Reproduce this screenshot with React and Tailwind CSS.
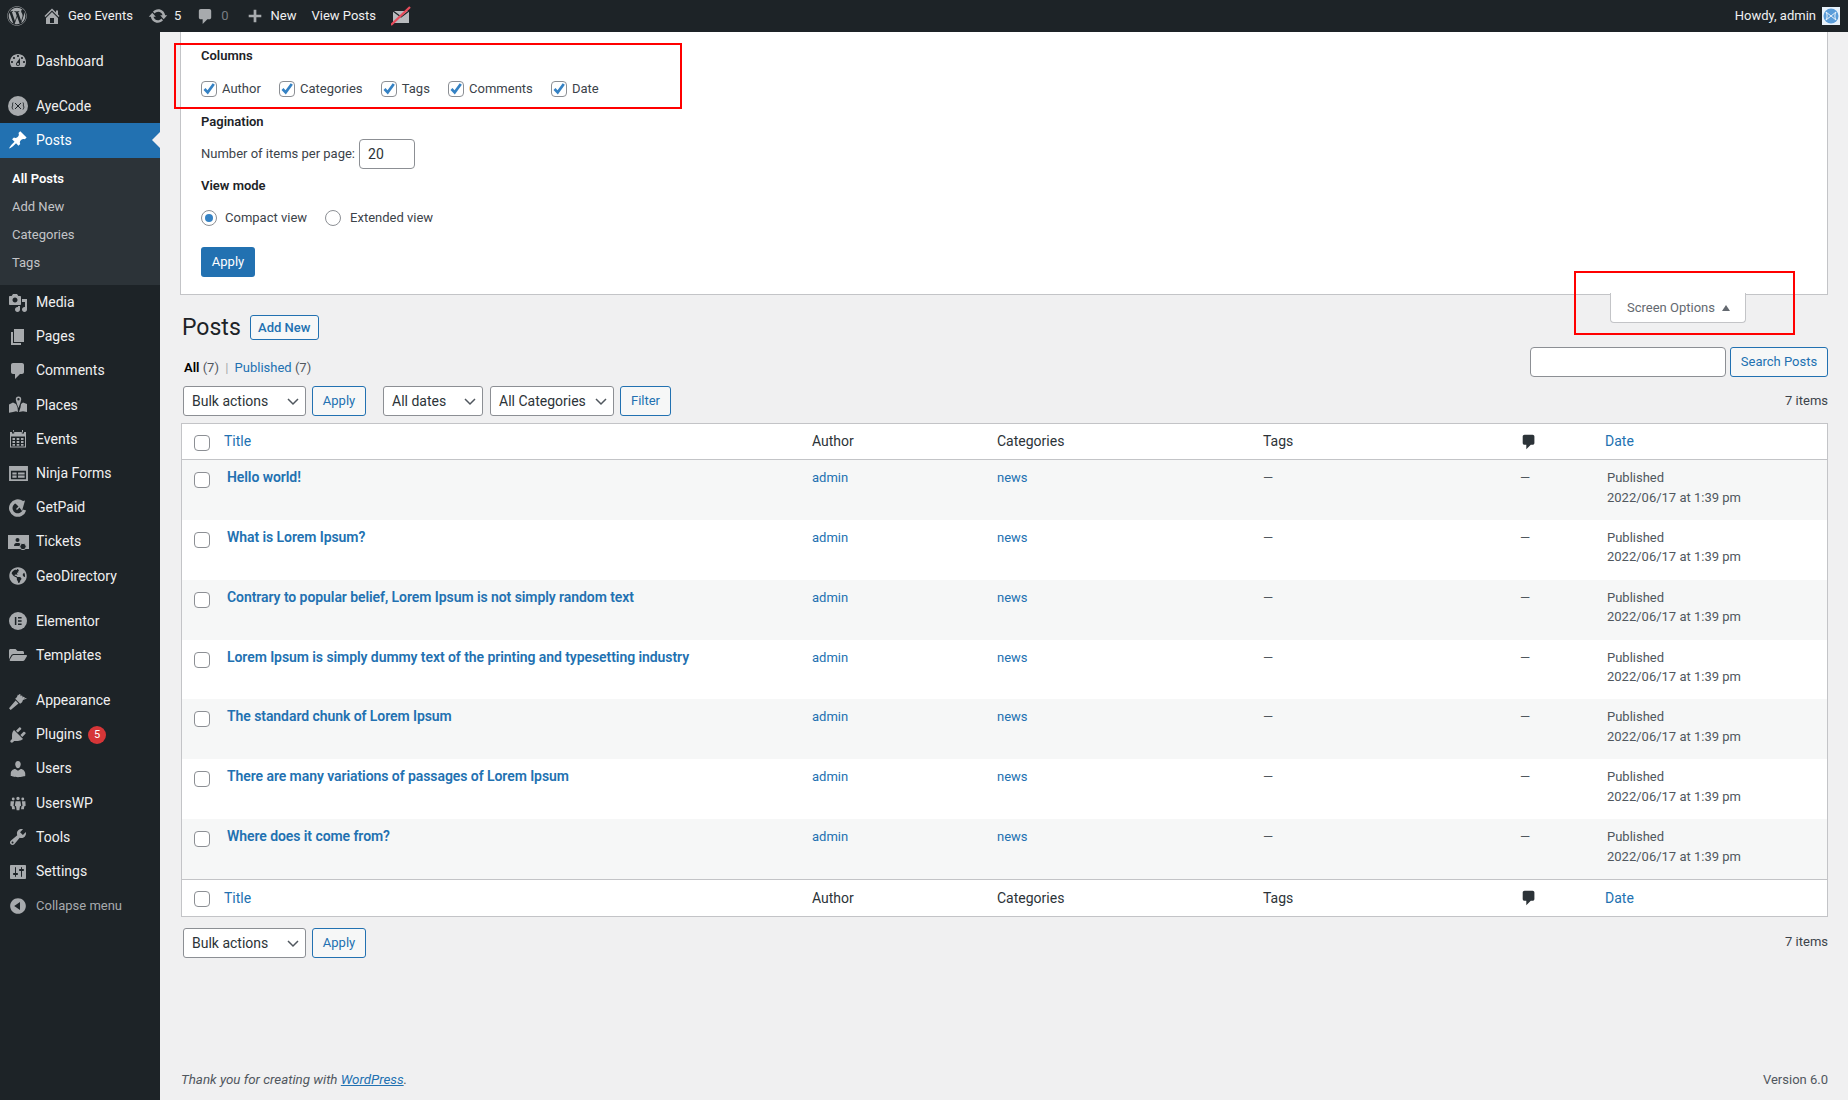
import React from "react";
import { FaWordpress, FaGlobeAmericas, FaFolderOpen } from "react-icons/fa";

const P = {
  home: "M16 8.5l1.53 1.53-1.06 1.06L10 4.62l-6.47 6.47-1.06-1.06L10 2.5l4 4v-2h2v4zm-6-2.46l6 5.99V18H4v-5.97zM12 17v-5H8v5h4z",
  update: "M10.2 3.28c3.53 0 6.43 2.61 6.92 6h2.08l-3.5 4-3.5-4h2.32c-.45-1.97-2.21-3.45-4.32-3.45-1.45 0-2.73.71-3.54 1.78L4.95 5.66C6.23 4.2 8.11 3.28 10.2 3.28zm-.4 13.44c-3.52 0-6.43-2.61-6.92-6H.8l3.5-4c1.17 1.33 2.33 2.67 3.5 4H5.48c.45 1.97 2.21 3.45 4.32 3.45 1.45 0 2.73-.71 3.54-1.78l1.71 1.95c-1.28 1.46-3.15 2.38-5.25 2.38z",
  comment: "M5 2h9c1.1 0 2 .9 2 2v7c0 1.1-.9 2-2 2h-2l-5 5v-5H5c-1.1 0-2-.9-2-2V4c0-1.1.9-2 2-2z",
  plus: "M11.5 3v5.5H17v3h-5.5V17h-3v-5.5H3v-3h5.5V3z",
  dashboard: "M3.76 16h12.48c1.1-1.37 1.76-3.11 1.76-5 0-4.42-3.58-8-8-8s-8 3.58-8 8c0 1.89.66 3.63 1.76 5zM10 4c.55 0 1 .45 1 1s-.45 1-1 1-1-.45-1-1 .45-1 1-1zM6 6c.55 0 1 .45 1 1s-.45 1-1 1-1-.45-1-1 .45-1 1-1zm8 0c.55 0 1 .45 1 1s-.45 1-1 1-1-.45-1-1 .45-1 1-1zm-5.37 5.55L12 7v6c0 1.1-.9 2-2 2s-2-.9-2-2c0-.57.24-1.08.63-1.45zM4 10c.55 0 1 .45 1 1s-.45 1-1 1-1-.45-1-1 .45-1 1-1zm12 0c.55 0 1 .45 1 1s-.45 1-1 1-1-.45-1-1 .45-1 1-1zm-5 3c0-.55-.45-1-1-1s-1 .45-1 1 .45 1 1 1 1-.45 1-1z",
  pin: "M10.44 3.02l1.82-1.82 6.36 6.35-1.83 1.82c-1.05-.68-2.48-.57-3.41.36l-.75.75c-.92.93-1.04 2.35-.35 3.41l-1.83 1.82-2.41-2.41-2.8 2.79c-.42.42-3.38 2.71-3.8 2.29s1.86-3.39 2.28-3.81l2.79-2.79L4.1 9.36l1.83-1.82c1.05.69 2.48.57 3.4-.36l.75-.75c.93-.92 1.05-2.35.36-3.41z",
  media: "M13 11V4c0-.55-.45-1-1-1h-1.67L9 1H5L3.67 3H2c-.55 0-1 .45-1 1v7c0 .55.45 1 1 1h10c.55 0 1-.45 1-1zM7 4.5c1.38 0 2.5 1.12 2.5 2.5S8.38 9.5 7 9.5 4.5 8.38 4.5 7 5.62 4.5 7 4.5zM14 6h5v10.5c0 1.38-1.12 2.5-2.5 2.5S14 17.88 14 16.5s1.12-2.5 2.5-2.5c.17 0 .34.02.5.05V9h-3V6zm-4 8.05V13h2v3.5c0 1.38-1.12 2.5-2.5 2.5S7 17.88 7 16.5 8.12 14 9.5 14c.17 0 .34.02.5.05z",
  page: "M6 15V2h10v13H6zm-1 1h8v2H3V5h2v11z",
  users: "M10 9.25c-2.27 0-2.73-3.44-2.73-3.44C7 4.02 7.82 2 9.97 2c2.16 0 2.98 2.02 2.71 3.81 0 0-.41 3.44-2.68 3.44zm0 2.57L12.72 10c2.39 0 4.52 2.33 4.52 4.53v2.49s-3.65 1.13-7.24 1.13c-3.65 0-7.24-1.13-7.24-1.13v-2.49c0-2.25 1.94-4.48 4.47-4.48z",
  tools: "M16.68 9.77c-1.34 1.34-3.3 1.67-4.95.99l-5.41 6.52c-.99.99-2.59.99-3.58 0s-.99-2.59 0-3.57l6.52-5.42c-.68-1.65-.35-3.61.99-4.95 1.28-1.28 3.12-1.62 4.72-1.06l-2.89 2.89 2.82 2.82 2.86-2.87c.53 1.58.18 3.39-1.08 4.67zM3.81 16.21c.4.39 1.04.39 1.43 0 .4-.4.4-1.04 0-1.43-.39-.4-1.03-.4-1.43 0-.39.39-.39 1.03 0 1.43z",
  plugins: "M13.11 4.36L9.87 7.6 8 5.73l3.24-3.24c.35-.34 1.05-.2 1.56.32.52.51.66 1.21.31 1.55zm-8 1.77l.91-1.12 9.01 9.01-1.19.84c-.71.71-2.63 1.16-3.82 1.16H6.14L4.9 17.26c-.59.59-1.54.59-2.12 0-.59-.58-.59-1.53 0-2.12l1.24-1.24v-3.88c0-1.13.4-3.19 1.09-3.89zm7.26 3.97l3.24-3.24c.34-.35 1.04-.21 1.55.31.52.51.66 1.21.31 1.55l-3.24 3.25z",
  settings: "M18 16V4c0-.55-.45-1-1-1H3c-.55 0-1 .45-1 1v12c0 .55.45 1 1 1h14c.55 0 1-.45 1-1zM8 11h1c.55 0 1 .45 1 1s-.45 1-1 1H8v1.5c0 .28-.22.5-.5.5s-.5-.22-.5-.5V13H6c-.55 0-1-.45-1-1s.45-1 1-1h1V5.5c0-.28.22-.5.5-.5s.5.22.5.5V11zm5-2h-1c-.55 0-1-.45-1-1s.45-1 1-1h1V5.5c0-.28.22-.5.5-.5s.5.22.5.5V7h1c.55 0 1 .45 1 1s-.45 1-1 1h-1v5.5c0 .28-.22.5-.5.5s-.5-.22-.5-.5V9z",
  collapse: "M10 2.16c4.33 0 7.84 3.51 7.84 7.84s-3.51 7.84-7.84 7.84S2.16 14.33 2.16 10 5.71 2.16 10 2.16zm2 11.72V6.12L6.18 9.97z",
  appearance: "M1 17.300L2.700 19l7.800-6.500-2.900-3zM7.200 7.800l4.900 5 2-1.600.9-2.200 4-1.600-1.500-.4-1.200.8.500-1.500-1.300-.6-1.300.8.500-1.500-1.300-.6-1.200.8.600-1.500-1.300-.6-1.200 1.100L10 3.400 8.800 6.200z",
  usersWp: "M10 3a1.900 1.900 0 1 1 0 3.800A1.900 1.900 0 0 1 10 3zM4.700 4a1.600 1.600 0 1 1 0 3.200 1.600 1.600 0 0 1 0-3.200zM15.300 4a1.600 1.600 0 1 1 0 3.200 1.600 1.600 0 0 1 0-3.200zM7.300 8h5.400l.8 5-1.300.6-.7 4.400H8.500l-.7-4.400-1.300-.6zM1.800 8h3.900L5 13l1.200 1 .4 3H3.400l-.3-3-1.600-1zM14.300 8h3.900l.3 5-1.600 1-.3 3h-3.200l.4-3 1.200-1z",
};

const Ico = ({ d, className = "w-5 h-5" }) => (
  <svg viewBox="0 0 20 20" fill="currentColor" className={className}><path d={d} /></svg>
);

const AyeIcon = () => (
  <svg viewBox="0 0 20 20" className="w-5 h-5">
    <circle cx="10" cy="10" r="10" fill="currentColor" />
    <path d="M5 6.500C4 8 5 9 4.500 10S4 12 5 13.500M15 6.500c1 1.500 0 2.500.5 3.500s.5 2-.5 3.500M7 7l6 6M13 7l-6 6" fill="none" stroke="#1d2327" strokeWidth="1" />
  </svg>
);
const PlacesIcon = () => (
  <svg viewBox="0 0 20 20" fill="currentColor" className="w-5 h-5">
    <path d="M1 9.500l4-2 3 1.500 1.500 3.500L10 17l-2-.8-3 .8-4 .8zM11 17l1.500-4.500L13 9l2-1.500 4 1.500V17l-4-.8z" />
    <path d="M10.500 1.500a2.700 2.700 0 0 1 2.700 2.700c0 1.500-1.700 6-2.700 8.800-1-2.800-2.700-7.300-2.700-8.800a2.700 2.700 0 0 1 2.700-2.700zm0 1.500a1.200 1.200 0 1 0 0 2.400 1.200 1.200 0 0 0 0-2.400z" />
  </svg>
);
const EventsIcon = () => (
  <svg viewBox="0 0 20 20" fill="currentColor" className="w-5 h-5">
    <path fillRule="evenodd" d="M5 1h1v2.500h-.2zM14 1h1v2.500h-1zM2 3h2v1.500h2.200V3h7.600v1.500H16V3h2v15.500H2zM3 7.500V17.500h14V7.500z" />
    <path d="M4.500 9h2.500v2H4.500zM8.700 9h2.600v2H8.700zM13 9h2.500v2H13zM4.500 12h2.500v2H4.500zM8.700 12h2.600v2H8.700zM13 12h2.500v2H13zM4.500 15h2.500v1.700H4.500zM8.700 15h2.600v1.700H8.700zM13 15h2.500v1.700H13z" />
  </svg>
);
const NinjaIcon = () => (
  <svg viewBox="0 0 20 18" fill="currentColor" className="w-[19px] h-[17px]">
    <path fillRule="evenodd" d="M0 1h20v16H0zM2 6v9h16V6zM3.500 8H8v2H3.500zM3.500 11H8v2.500H3.500zM9.500 8H16.500v2H9.500zM9.500 11H16.500v2.500H9.500z" />
  </svg>
);
const GetPaidIcon = () => (
  <svg viewBox="0 0 20 20" className="w-5 h-5" fill="none">
    <path d="M14 4.500A7 7 0 1 0 16.500 12" stroke="currentColor" strokeWidth="3.500" />
    <path d="M7 5l10-2.500L14 13l-2.500-3.500L9 12l-1-1 2.500-2.500z" fill="currentColor" />
  </svg>
);
const TicketsIcon = () => (
  <svg viewBox="0 0 21 16" className="w-[21px] h-4">
    <path d="M0 1h21v14H0z" fill="currentColor" />
    <circle cx="9.500" cy="6" r="2" fill="#1d2327" />
    <path d="M6 12c0-2.500 1.500-3 3.500-3s3.500.5 3.500 3z" fill="#1d2327" />
    <circle cx="15" cy="12.500" r="3.200" fill="#1d2327" stroke="currentColor" />
  </svg>
);
const ElementorIcon = () => (
  <svg viewBox="0 0 20 20" className="w-[18px] h-[18px]">
    <circle cx="10" cy="10" r="10" fill="currentColor" />
    <path d="M6.500 5.500h1.700v9H6.500zM10 5.500h4v1.700h-4zM10 9.200h4v1.700h-4zM10 12.800h4v1.700h-4z" fill="#1d2327" />
  </svg>
);

const topMenu = [
  { n: "Media", i: <Ico d={P.media} /> },
  { n: "Pages", i: <Ico d={P.page} /> },
  { n: "Comments", i: <Ico d={P.comment} /> },
  { n: "Places", i: <PlacesIcon /> },
  { n: "Events", i: <EventsIcon /> },
  { n: "Ninja Forms", i: <NinjaIcon /> },
  { n: "GetPaid", i: <GetPaidIcon /> },
  { n: "Tickets", i: <TicketsIcon /> },
  { n: "GeoDirectory", i: <FaGlobeAmericas className="w-[18px] h-[18px]" /> },
];
const midMenu = [
  { n: "Elementor", i: <ElementorIcon /> },
  { n: "Templates", i: <FaFolderOpen className="w-[18px] h-[18px]" /> },
];
const lowMenu = [
  { n: "Appearance", i: <Ico d={P.appearance} /> },
  { n: "Plugins", i: <Ico d={P.plugins} />, badge: "5" },
  { n: "Users", i: <Ico d={P.users} /> },
  { n: "UsersWP", i: <Ico d={P.usersWp} className="w-[18px] h-[18px]" /> },
  { n: "Tools", i: <Ico d={P.tools} /> },
  { n: "Settings", i: <Ico d={P.settings} /> },
];

const MenuItem = ({ item }) => (
  <div className="flex items-center h-[34.2px] text-[14px] text-[#f0f0f1]">
    <span className="w-9 flex justify-center text-[#a7aaad]">{item.i}</span>
    <span>{item.n}</span>
    {item.badge && (
      <span className="ml-[6px] w-[18px] h-[18px] rounded-full bg-[#d63638] text-white text-[11px] flex items-center justify-center">{item.badge}</span>
    )}
  </div>
);

const Sidebar = () => (
  <aside className="w-[160px] shrink-0 bg-[#1d2327] pt-3">
    <MenuItem item={{ n: "Dashboard", i: <Ico d={P.dashboard} /> }} />
    <div className="h-[11px]" />
    <MenuItem item={{ n: "AyeCode", i: <AyeIcon /> }} />
    <div className="relative flex items-center h-[34.2px] bg-[#2271b1] text-white text-[14px]">
      <span className="w-9 flex justify-center"><Ico d={P.pin} /></span>
      <span>Posts</span>
      <span className="absolute right-0 top-[9px] border-y-[8px] border-r-[8px] border-y-transparent border-r-[#f0f0f1]" />
    </div>
    <div className="bg-[#2c3338] pt-[7px] pb-[8.5px] text-[13px] text-[#c3c4c7]">
      <div className="h-[28.1px] flex items-center pl-3 font-semibold text-white">All Posts</div>
      <div className="h-[28.1px] flex items-center pl-3">Add New</div>
      <div className="h-[28.1px] flex items-center pl-3">Categories</div>
      <div className="h-[28.1px] flex items-center pl-3">Tags</div>
    </div>
    {topMenu.map((m) => <MenuItem key={m.n} item={m} />)}
    <div className="h-[11px]" />
    {midMenu.map((m) => <MenuItem key={m.n} item={m} />)}
    <div className="h-[11px]" />
    {lowMenu.map((m) => <MenuItem key={m.n} item={m} />)}
    <div className="flex items-center h-[34.2px] text-[13px] text-[#a7aaad]">
      <span className="w-9 flex justify-center"><Ico d={P.collapse} /></span>
      <span>Collapse menu</span>
    </div>
  </aside>
);

const AdminBar = () => (
  <header className="h-8 bg-[#1d2327] flex items-center text-[13px] text-[#f0f0f1] shrink-0">
    <span className="ml-[7px] text-[#a7aaad]"><FaWordpress className="w-5 h-5" /></span>
    <span className="ml-[15px] text-[#a7aaad]"><Ico d={P.home} className="w-5 h-5" /></span>
    <span className="ml-[6px]">Geo Events</span>
    <span className="ml-[15px] text-[#a7aaad]"><Ico d={P.update} /></span>
    <span className="ml-[6px]">5</span>
    <span className="ml-[15px] text-[#a7aaad]"><Ico d={P.comment} className="w-[19px] h-[19px]" /></span>
    <span className="ml-[6px] text-[#787c82]">0</span>
    <span className="ml-[17px] text-[#a7aaad]"><Ico d={P.plus} className="w-[18px] h-[18px]" /></span>
    <span className="ml-[7px]">New</span>
    <span className="ml-[15px]">View Posts</span>
    <span className="ml-[15px] relative">
      <svg viewBox="0 0 20 20" className="w-5 h-5">
        <path d="M2 5h16v12H2z" fill="#b8babd" />
        <path d="M2 5l8 6 8-6" fill="none" stroke="#1d2327" strokeWidth="1.300" />
        <path d="M0 19L19 1" stroke="#e74c5b" strokeWidth="2.300" />
      </svg>
    </span>
    <span className="ml-auto">Howdy, admin</span>
    <span className="ml-[6px] mr-2 w-[18px] h-[18px] bg-[#e8f2fb] flex items-center justify-center">
      <svg viewBox="0 0 16 16" className="w-4 h-4">
        <circle cx="8" cy="8" r="7.500" fill="#5b9dd9" />
        <path d="M3 4l10 8M13 4L3 12M3 4c1.500 2.500 1.500 5.500 0 8M13 4c-1.500 2.500-1.500 5.500 0 8" fill="none" stroke="#e8f2fb" strokeWidth="1" />
      </svg>
    </span>
  </header>
);

const Check = ({ checked }) => (
  <span className="inline-flex items-center justify-center w-4 h-4 rounded-[4px] border border-[#8c8f94] bg-white shrink-0">
    {checked && (
      <svg viewBox="0 0 16 16" className="w-4 h-4 shrink-0"><path d="M3.500 8l3.200 3.400L12.800 3" fill="none" stroke="#3582c4" strokeWidth="2.700" /></svg>
    )}
  </span>
);
const Radio = ({ checked }) => (
  <span className="inline-flex items-center justify-center w-4 h-4 rounded-full border border-[#8c8f94] bg-white shrink-0">
    {checked && <span className="w-2 h-2 rounded-full bg-[#3582c4]" />}
  </span>
);

const ScreenOptions = () => (
  <section className="relative ml-5 mr-5 bg-white border-x border-b border-[#c3c4c7] pt-[14px] pl-5 pb-[17px] text-[13px] text-[#3c434a]">
    <div className="h-5 leading-5 font-semibold text-[#1d2327]">Columns</div>
    <div className="mt-[15px] flex items-center gap-[18.2px] h-4">
      {["Author", "Categories", "Tags", "Comments", "Date"].map((c) => (
        <label key={c} className="flex items-center gap-[5px]"><Check checked /><span>{c}</span></label>
      ))}
    </div>
    <div className="mt-[15px] h-5 leading-5 font-semibold text-[#1d2327]">Pagination</div>
    <div className="mt-[7px] flex items-center gap-[4px]">
      <span>Number of items per page:</span>
      <span className="w-[56px] h-[30px] rounded-[4px] border border-[#8c8f94] bg-white text-[14px] text-[#2c3338] flex items-center pl-2">20</span>
    </div>
    <div className="mt-[7px] h-5 leading-5 font-semibold text-[#1d2327]">View mode</div>
    <div className="mt-[14px] flex items-center h-4">
      <label className="flex items-center gap-[8px]"><Radio checked /><span>Compact view</span></label>
      <label className="flex items-center gap-[9px] ml-[18px]"><Radio /><span>Extended view</span></label>
    </div>
    <button className="mt-[21px] block w-[54px] h-[30px] rounded-[3px] bg-[#2271b1] text-white text-[13px]">Apply</button>
    <div className="absolute right-[81px] top-full -mt-px w-[136px] h-[30px] bg-white border-x border-b border-[#c3c4c7] rounded-b-[4px] flex items-center pl-4 text-[#646970] gap-[7px]">
      <span>Screen Options</span>
      <span className="w-0 h-0 border-x-[4px] border-b-[6px] border-x-transparent border-b-[#646970]" />
    </div>
  </section>
);

const OutlineBtn = ({ children, className = "" }) => (
  <button className={`h-[30px] rounded-[3px] border border-[#2271b1] bg-[#f6f7f7] text-[#2271b1] text-[13px] ${className}`}>{children}</button>
);
const Sel = ({ children, className = "" }) => (
  <div className={`h-[30px] rounded-[3px] border border-[#8c8f94] bg-white text-[14px] text-[#2c3338] flex items-center justify-between pl-[8px] pr-[4px] ${className}`}>
    <span>{children}</span>
    <svg viewBox="0 0 16 16" className="w-4 h-4"><path d="M3 6l5 5 5-5" fill="none" stroke="#50575e" strokeWidth="1.500" /></svg>
  </div>
);

const posts = [
  "Hello world!",
  "What is Lorem Ipsum?",
  "Contrary to popular belief, Lorem Ipsum is not simply random text",
  "Lorem Ipsum is simply dummy text of the printing and typesetting industry",
  "The standard chunk of Lorem Ipsum",
  "There are many variations of passages of Lorem Ipsum",
  "Where does it come from?",
];

const HeadCells = ({ border, h }) => (
  <tr className={`${h} text-[14px] font-normal text-left`}>
    <th className={`${border} font-normal pl-[12px] align-middle`}><span className="block mt-[8px]"><Check /></span></th>
    <th className={`${border} font-normal text-[#2271b1] pl-[10px]`}>Title</th>
    <th className={`${border} font-normal text-[#2c3338] pl-[9px]`}>Author</th>
    <th className={`${border} font-normal text-[#2c3338] pl-[10px]`}>Categories</th>
    <th className={`${border} font-normal text-[#2c3338] pl-[9px]`}>Tags</th>
    <th className={`${border} font-normal text-[#2c3338] pl-[8px]`}><Ico d={P.comment} className="w-[18px] h-[18px] text-[#2c3338]" /></th>
    <th className={`${border} font-normal text-[#2271b1] pl-2`}>Date</th>
  </tr>
);

const PostsTable = () => (
  <table className="w-full table-fixed border-separate border-spacing-0 border border-[#c3c4c7] bg-white">
    <colgroup>
      <col className="w-[32px]" />
      <col className="w-[589px]" />
      <col className="w-[184px]" />
      <col className="w-[267px]" />
      <col className="w-[258px]" />
      <col className="w-[85px]" />
      <col />
    </colgroup>
    <thead><HeadCells h="h-[36px]" border="border-b border-[#c3c4c7]" /></thead>
    <tbody className="text-[13px] text-[#50575e]">
      {posts.map((t, i) => (
        <tr key={t} className={`h-[59.86px] align-top ${i % 2 === 0 ? "bg-[#f6f7f7]" : "bg-white"}`}>
          <td className="pl-[12px] pt-[12px]"><Check /></td>
          <td className="pl-[13px] pt-[7px] text-[14px] font-semibold text-[#2271b1] leading-5 tracking-[-0.07px]">{t}</td>
          <td className="pl-[9px] pt-[8px] text-[#2271b1] leading-[19.5px]">admin</td>
          <td className="pl-[10px] pt-[8px] text-[#2271b1] leading-[19.5px]">news</td>
          <td className="pl-[9px] pt-[8px] leading-[19.5px]">—</td>
          <td className="pl-[8px] pt-[8px] leading-[19.5px]">—</td>
          <td className="pl-[10px] pt-[8px] leading-[19.5px]">Published<br />2022/06/17 at 1:39 pm</td>
        </tr>
      ))}
    </tbody>
    <tfoot><HeadCells h="h-[37px]" border="border-t border-[#c3c4c7]" /></tfoot>
  </table>
);

const Main = () => (
  <main className="flex-1 min-w-0 flex flex-col bg-[#f0f0f1] font-normal">
    <ScreenOptions />
    <div className="flex-1 flex flex-col pl-[21px] pr-5">
      <div className="mt-[20px] ml-px flex items-center h-[25px]">
        <h1 className="text-[23px] text-[#1d2327] leading-[25px]">Posts</h1>
        <OutlineBtn className="!h-[25px] w-[69px] ml-[9px] font-medium">Add New</OutlineBtn>
      </div>
      <div className="mt-[7px] ml-px flex items-start justify-between h-[30px]">
        <div className="mt-[11px] h-5 leading-5 text-[13px] text-[#50575e] pl-[2px]">
          <span className="font-semibold text-black">All</span> (7) <span className="text-[#a7aaad] mx-[3px]">|</span> <span className="text-[#2271b1]">Published</span> (7)
        </div>
        <div className="flex gap-1">
          <div className="w-[196px] h-[30px] rounded-[4px] border border-[#8c8f94] bg-white" />
          <OutlineBtn className="w-[98px]">Search Posts</OutlineBtn>
        </div>
      </div>
      <div className="mt-[9px] ml-[2px] flex items-center h-[30px]">
        <Sel className="w-[123px]">Bulk actions</Sel>
        <OutlineBtn className="w-[54px] ml-[6px]">Apply</OutlineBtn>
        <Sel className="w-[100px] ml-[17px]">All dates</Sel>
        <Sel className="w-[124px] ml-[7px]">All Categories</Sel>
        <OutlineBtn className="w-[51px] ml-[6px]">Filter</OutlineBtn>
        <span className="ml-auto text-[13px] text-[#3c434a]">7 items</span>
      </div>
      <div className="mt-[7px]"><PostsTable /></div>
      <div className="mt-[11px] ml-[2px] flex items-center h-[30px]">
        <Sel className="w-[123px]">Bulk actions</Sel>
        <OutlineBtn className="w-[54px] ml-[6px]">Apply</OutlineBtn>
        <span className="ml-auto -mt-[2px] text-[13px] text-[#3c434a]">7 items</span>
      </div>
      <footer className="mt-auto mb-[10px] flex justify-between text-[13px] text-[#50575e] leading-5">
        <span className="italic text-[13.35px]">Thank you for creating with <span className="text-[#2271b1] underline">WordPress</span>.</span>
        <span>Version 6.0</span>
      </footer>
    </div>
  </main>
);

export default function App() {
  return (
    <div className="relative w-[1848px] h-[1100px] overflow-hidden flex flex-col bg-[#f0f0f1] [font-family:Roboto,sans-serif]">
      <AdminBar />
      <div className="flex-1 flex min-h-0">
        <Sidebar />
        <Main />
      </div>
      <div className="absolute left-[174px] top-[43px] w-[508px] h-[66px] border-2 border-[#ff0000] pointer-events-none" />
      <div className="absolute left-[1574px] top-[271px] w-[221px] h-[64px] border-2 border-[#ff0000] pointer-events-none" />
    </div>
  );
}
